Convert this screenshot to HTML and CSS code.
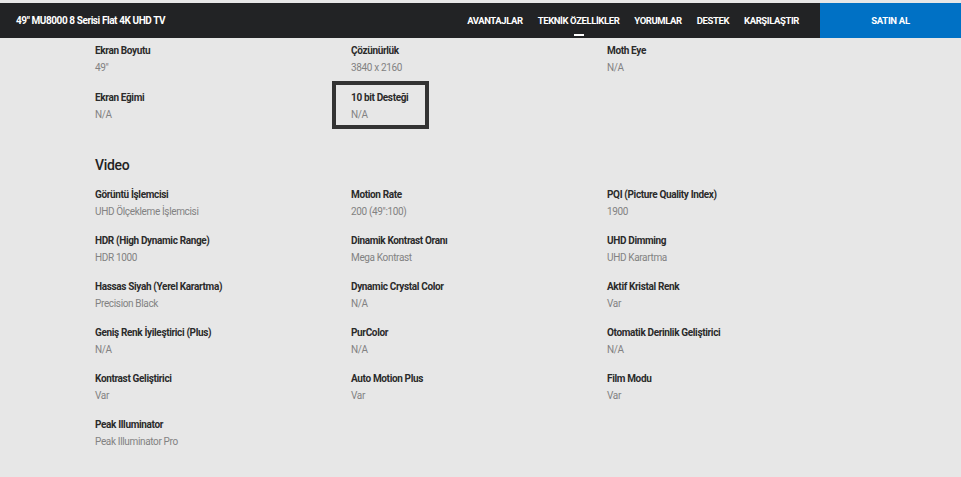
FILE: index.html
```html
<!DOCTYPE html>
<html lang="tr">
<head>
<meta charset="utf-8">
<title>49" MU8000 8 Serisi Flat 4K UHD TV</title>
<link rel="stylesheet" href="styles.css">
</head>
<body>
<header class="bar">
  <div class="title">49" MU8000 8 Serisi Flat 4K UHD TV</div>
  <nav class="nav">
    <a class="nav-item">AVANTAJLAR</a>
    <a class="nav-item active">TEKNİK ÖZELLİKLER</a>
    <a class="nav-item">YORUMLAR</a>
    <a class="nav-item">DESTEK</a>
    <a class="nav-item">KARŞILAŞTIR</a>
  </nav>
  <a class="buy">SATIN AL</a>
</header>
<main class="specs">
  <div class="grid grid-top">
    <div class="item"><div class="label">Ekran Boyutu</div><div class="value">49"</div></div>
    <div class="item"><div class="label">Çözünürlük</div><div class="value">3840 x 2160</div></div>
    <div class="item"><div class="label">Moth Eye</div><div class="value">N/A</div></div>
    <div class="item"><div class="label">Ekran Eğimi</div><div class="value">N/A</div></div>
    <div class="item focused"><div class="label">10 bit Desteği</div><div class="value">N/A</div></div>
  </div>
  <h2 class="section-title">Video</h2>
  <div class="grid">
    <div class="item"><div class="label">Görüntü İşlemcisi</div><div class="value">UHD Ölçekleme İşlemcisi</div></div>
    <div class="item"><div class="label">Motion Rate</div><div class="value">200 (49":100)</div></div>
    <div class="item"><div class="label">PQI (Picture Quality Index)</div><div class="value">1900</div></div>
    <div class="item"><div class="label">HDR (High Dynamic Range)</div><div class="value">HDR 1000</div></div>
    <div class="item"><div class="label">Dinamik Kontrast Oranı</div><div class="value">Mega Kontrast</div></div>
    <div class="item"><div class="label">UHD Dimming</div><div class="value">UHD Karartma</div></div>
    <div class="item"><div class="label">Hassas Siyah (Yerel Karartma)</div><div class="value">Precision Black</div></div>
    <div class="item"><div class="label">Dynamic Crystal Color</div><div class="value">N/A</div></div>
    <div class="item"><div class="label">Aktif Kristal Renk</div><div class="value">Var</div></div>
    <div class="item"><div class="label">Geniş Renk İyileştirici (Plus)</div><div class="value">N/A</div></div>
    <div class="item"><div class="label">PurColor</div><div class="value">N/A</div></div>
    <div class="item"><div class="label">Otomatik Derinlik Geliştirici</div><div class="value">N/A</div></div>
    <div class="item"><div class="label">Kontrast Geliştirici</div><div class="value">Var</div></div>
    <div class="item"><div class="label">Auto Motion Plus</div><div class="value">Var</div></div>
    <div class="item"><div class="label">Film Modu</div><div class="value">Var</div></div>
    <div class="item"><div class="label">Peak Illuminator</div><div class="value">Peak Illuminator Pro</div></div>
  </div>
</main>
</body>
</html>
```

FILE: styles.css
```css
* { box-sizing: border-box; }

html, body {
  margin: 0;
  background: #e7e7e7;
}

body {
  padding-top: 3px;
  font-family: Roboto, "Liberation Sans", sans-serif;
  font-size: 10px;
  color: #2b2b2b;
}

.bar {
  display: flex;
  align-items: stretch;
  height: 35px;
  background: #222325;
  color: #fff;
}

.title {
  display: flex;
  align-items: center;
  padding-left: 16px;
  font-size: 10px;
  font-weight: 700;
  letter-spacing: -0.42px;
}

.nav {
  display: flex;
  align-items: center;
  gap: 15px;
  margin-left: auto;
  margin-right: 21px;
}

.nav-item {
  position: relative;
  font-size: 9.5px;
  font-weight: 700;
  letter-spacing: -0.4px;
  color: #fff;
  text-decoration: none;
}

.nav-item.active::after {
  content: "";
  position: absolute;
  left: 50%;
  bottom: -10px;
  width: 10px;
  height: 2px;
  margin-left: -5px;
  background: #fff;
}

.buy {
  display: flex;
  align-items: center;
  justify-content: center;
  width: 141px;
  background: #0071c5;
  color: #fff;
  font-size: 9.5px;
  font-weight: 700;
  letter-spacing: -0.3px;
  text-decoration: none;
}

.specs {
  padding: 6px 0 0 95px;
}

.grid {
  display: grid;
  grid-template-columns: repeat(3, 256px);
  row-gap: 15px;
}

.grid-top {
  row-gap: 16px;
}

.item {
  position: relative;
  display: flex;
  flex-direction: column;
  gap: 3px;
}

.label {
  line-height: 14px;
  font-weight: 700;
  color: #2b2b2b;
  letter-spacing: -0.35px;
}

.value {
  line-height: 14px;
  font-size: 10px;
  color: #828282;
  letter-spacing: -0.35px;
}

.item.focused::after {
  content: "";
  position: absolute;
  top: -10px;
  bottom: -7px;
  left: -19px;
  width: 89px;
  border: 4px solid #333;
}

.section-title {
  margin: 33px 0 13px;
  font-size: 14px;
  line-height: 20px;
  font-weight: 500;
  color: #222;
  letter-spacing: -0.3px;
}
```
